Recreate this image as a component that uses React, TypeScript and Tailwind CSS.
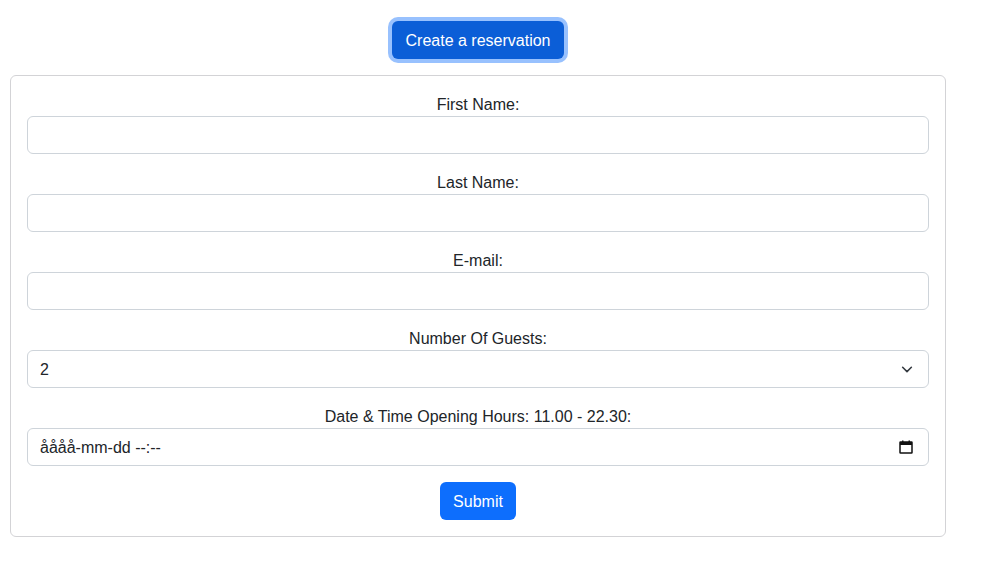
import React from 'react'

const fields = ['First Name:', 'Last Name:', 'E-mail:']

function Label({ text }: { text: string }) {
  return <div className="pt-px text-center text-[16px] leading-[23px] text-[#212529]">{text}</div>
}

export default function App() {
  return (
    <div
      className="min-h-[569px] w-[982px] bg-white text-[#212529]"
      style={{ fontFamily: '"Liberation Sans", Arial, sans-serif' }}
    >
      <div className="ml-[10px] w-[936px]">
        {/* Top toggle button */}
        <div className="flex justify-center pt-[21px]">
          <button className="h-[38px] rounded-[6px] bg-[#0b5ed7] px-[14px] pt-px text-[16px] leading-6 text-white shadow-[0_0_0_4px_rgba(49,132,253,0.5)]">
            Create a reservation
          </button>
        </div>

        {/* Form card */}
        <div className="mt-4 rounded-[6px] border border-[#d3d3d6] p-4">
          {fields.map(f => (
            <div key={f} className="mb-4">
              <Label text={f} />
              <div className="h-[38px] w-full rounded-[6px] border border-[#ced4da] bg-white" />
            </div>
          ))}

          {/* Guests */}
          <div className="mb-4">
            <Label text="Number Of Guests:" />
            <div className="flex h-[38px] w-full items-center justify-between rounded-[6px] border border-[#ced4da] bg-white pl-3 pr-[14px]">
              <span className="pt-px text-[16px]">2</span>
              <svg width="14" height="14" viewBox="0 0 16 16" fill="none">
                <path d="M3 6l5 5 5-5" stroke="#343a40" strokeWidth="1.8" strokeLinecap="round" strokeLinejoin="round" />
              </svg>
            </div>
          </div>

          {/* Date & time */}
          <div className="mb-4">
            <Label text="Date & Time Opening Hours: 11.00 - 22.30:" />
            <div className="flex h-[38px] w-full items-center justify-between rounded-[6px] border border-[#ced4da] bg-white pl-3 pr-[15px]">
              <span className="pt-px text-[16px]">åååå-mm-dd --:--</span>
              <svg width="14" height="14" viewBox="0 0 14 14">
                <rect x="1" y="2" width="12" height="11" rx="0.5" fill="none" stroke="#111" strokeWidth="1.5" />
                <rect x="1" y="2" width="12" height="3" fill="#111" />
                <rect x="3" y="0.5" width="1.5" height="2.5" fill="#111" />
                <rect x="9.5" y="0.5" width="1.5" height="2.5" fill="#111" />
              </svg>
            </div>
          </div>

          <div className="flex justify-center">
            <button className="h-[38px] rounded-[6px] bg-[#0d6efd] px-[13px] pt-px text-[16px] leading-6 text-white">
              Submit
            </button>
          </div>
        </div>
      </div>
    </div>
  )
}
